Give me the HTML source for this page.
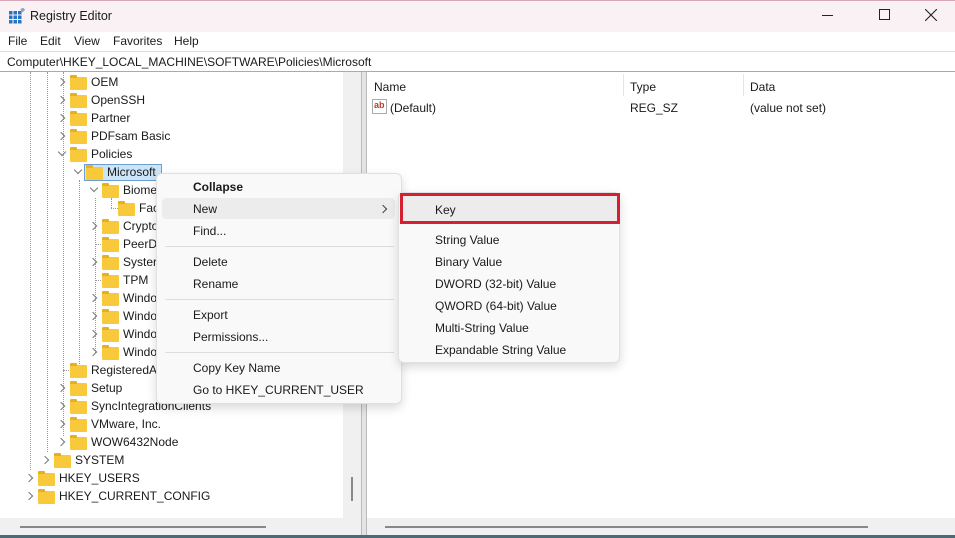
<!DOCTYPE html>
<html><head><meta charset="utf-8"><style>
*{margin:0;padding:0;box-sizing:border-box}
body{width:955px;height:538px;overflow:hidden;background:#f3eef0;font-family:"Liberation Sans",sans-serif;font-size:12px;color:#1a1a1a;position:relative}
.a{position:absolute;white-space:nowrap}
.fold{position:absolute;width:17px;height:13px;background:#f8c93a;border-radius:1px}
.fold:before{content:"";position:absolute;left:0;top:-2px;width:7px;height:3px;background:#e8b020;border-radius:1px 1px 0 0}
.chev{position:absolute;width:6px;height:6px;border-right:1.3px solid #777;border-bottom:1.3px solid #777}
.r{transform:rotate(-45deg)}.d{transform:rotate(45deg)}
.dot{position:absolute;border-left:1px dotted #999}
.hd{position:absolute;border-top:1px dotted #999;height:0}
</style></head><body>
<!-- title -->
<div class="a" style="left:0;top:0;width:955px;height:32px;background:#f9f1f3;border-top:1px solid #d9a8b4"></div>
<svg class="a" style="left:9px;top:8px" width="16" height="16"><g fill="#2a73c4"><rect x="0" y="3" width="3.5" height="3.5"/><rect x="4.5" y="3" width="3.5" height="3.5"/><rect x="9" y="3" width="3.5" height="3.5"/><rect x="0" y="7.5" width="3.5" height="3.5"/><rect x="4.5" y="7.5" width="3.5" height="3.5"/><rect x="9" y="7.5" width="3.5" height="3.5"/><rect x="0" y="12" width="3.5" height="3.5"/><rect x="4.5" y="12" width="3.5" height="3.5"/><rect x="9" y="12" width="3.5" height="3.5"/></g><rect x="12" y="0" width="3.5" height="3.5" fill="#8ab" transform="rotate(45 13.7 1.7)"/></svg>
<div class="a" style="left:30px;top:9px;font-size:12.5px">Registry Editor</div>
<div class="a" style="left:822px;top:15px;width:11px;height:1px;background:#222"></div>
<div class="a" style="left:879px;top:9px;width:11px;height:11px;border:1px solid #222"></div>
<svg class="a" style="left:925px;top:9px" width="12" height="12"><path d="M0 0L12 12M12 0L0 12" stroke="#222" stroke-width="1.1"/></svg>
<!-- menu -->
<div class="a" style="left:0;top:32px;width:955px;height:19px;background:#fff"></div>
<div class="a" style="left:8px;top:34px">File</div>
<div class="a" style="left:40px;top:34px">Edit</div>
<div class="a" style="left:74px;top:34px">View</div>
<div class="a" style="left:113px;top:34px">Favorites</div>
<div class="a" style="left:174px;top:34px">Help</div>
<div class="a" style="left:0;top:51px;width:955px;height:21px;background:#fff;border-top:1px solid #ddd;border-bottom:1px solid #aaa"></div>
<div class="a" style="left:7px;top:55px">Computer\HKEY_LOCAL_MACHINE\SOFTWARE\Policies\Microsoft</div>
<!-- left pane -->
<div class="a" style="left:0;top:72px;width:343px;height:446px;background:#fff"></div>
<div class="a" style="left:343px;top:72px;width:18px;height:446px;background:#f0f0f0"></div>
<div class="a" style="left:351px;top:477px;width:2px;height:24px;background:#888"></div>
<div class="a" style="left:361px;top:72px;width:6px;height:464px;background:#e4e4e4;border-left:1px solid #bbb;border-right:1px solid #bbb"></div>
<div class="a" style="left:367px;top:72px;width:588px;height:446px;background:#fff"></div>
<div class="a" style="left:0;top:518px;width:361px;height:17px;background:#f0f0f0"></div>
<div class="a" style="left:20px;top:526px;width:246px;height:2px;background:#888"></div>
<div class="a" style="left:367px;top:518px;width:588px;height:17px;background:#f0f0f0"></div>
<div class="a" style="left:385px;top:526px;width:483px;height:2px;background:#888"></div>
<div class="a" style="left:0;top:535px;width:955px;height:3px;background:#4a6a78"></div>
<!-- dotted guides -->
<div class="dot" style="left:30px;top:72px;height:398px"></div>
<div class="dot" style="left:47px;top:72px;height:380px"></div>
<div class="dot" style="left:63px;top:72px;height:364px"></div>
<div class="dot" style="left:79px;top:180px;height:190px"></div>
<div class="dot" style="left:95px;top:198px;height:155px"></div>
<div class="dot" style="left:111px;top:198px;height:10px"></div>
<div class="hd" style="left:111px;top:208px;width:7px"></div>
<div class="hd" style="left:95px;top:244px;width:6px"></div>
<div class="hd" style="left:95px;top:280px;width:6px"></div>
<div class="hd" style="left:63px;top:370px;width:6px"></div>
<!-- selected Microsoft -->
<div class="a" style="left:84px;top:164px;width:78px;height:17px;background:#cce4f7;border:1px solid #6a9fd0"></div>
<div id="tree"></div>
<!-- right headers -->
<div class="a" style="left:374px;top:80px">Name</div>
<div class="a" style="left:623px;top:74px;width:1px;height:22px;background:#e5e5e5"></div>
<div class="a" style="left:630px;top:80px">Type</div>
<div class="a" style="left:743px;top:74px;width:1px;height:22px;background:#e5e5e5"></div>
<div class="a" style="left:750px;top:80px">Data</div>
<div class="a" style="left:372px;top:99px;width:15px;height:15px;border:1px solid #aaa;background:#fff;font-size:9px;font-weight:bold;color:#c0392b;line-height:10px;padding-left:1px">ab</div>
<div class="a" style="left:390px;top:101px">(Default)</div>
<div class="a" style="left:630px;top:101px">REG_SZ</div>
<div class="a" style="left:750px;top:101px">(value not set)</div>
<!-- context menu -->
<div class="a" style="left:156px;top:173px;width:246px;height:231px;background:#f9f9f9;border:1px solid #e0e0e0;border-radius:6px;box-shadow:0 4px 10px rgba(0,0,0,.15)"></div>
<div class="a" style="left:162px;top:198px;width:233px;height:21px;background:#ececec;border-radius:4px"></div>
<div class="a" style="left:193px;top:180px;font-weight:bold">Collapse</div>
<div class="a" style="left:193px;top:202px">New</div>
<div class="chev r a" style="left:380px;top:206px;border-color:#444"></div>
<div class="a" style="left:193px;top:224px">Find...</div>
<div class="a" style="left:165px;top:246px;width:229px;height:1px;background:#ddd"></div>
<div class="a" style="left:193px;top:255px">Delete</div>
<div class="a" style="left:193px;top:277px">Rename</div>
<div class="a" style="left:165px;top:299px;width:229px;height:1px;background:#ddd"></div>
<div class="a" style="left:193px;top:308px">Export</div>
<div class="a" style="left:193px;top:330px">Permissions...</div>
<div class="a" style="left:165px;top:352px;width:229px;height:1px;background:#ddd"></div>
<div class="a" style="left:193px;top:361px">Copy Key Name</div>
<div class="a" style="left:193px;top:383px">Go to HKEY_CURRENT_USER</div>
<!-- submenu -->
<div class="a" style="left:398px;top:192px;width:222px;height:171px;background:#f9f9f9;border:1px solid #e0e0e0;border-radius:6px;box-shadow:0 4px 10px rgba(0,0,0,.15)"></div>
<div class="a" style="left:400px;top:193px;width:220px;height:31px;background:#ececec;border:3px solid #d42030"></div>
<div class="a" style="left:435px;top:203px">Key</div>
<div class="a" style="left:435px;top:233px">String Value</div>
<div class="a" style="left:435px;top:255px">Binary Value</div>
<div class="a" style="left:435px;top:277px">DWORD (32-bit) Value</div>
<div class="a" style="left:435px;top:299px">QWORD (64-bit) Value</div>
<div class="a" style="left:435px;top:321px">Multi-String Value</div>
<div class="a" style="left:435px;top:343px">Expandable String Value</div>
<script>
var rows=[["OEM",82,62,"r"],["OpenSSH",100,62,"r"],["Partner",118,62,"r"],["PDFsam Basic",136,62,"r"],["Policies",154,62,"d"],["Microsoft",172,78,"d"],["Biome",190,94,"d"],["Fac",208,110,""],["Crypto",226,94,"r"],["PeerD",244,94,""],["Syster",262,94,"r"],["TPM",280,94,""],["Windo",298,94,"r"],["Windo",316,94,"r"],["Windo",334,94,"r"],["Windo",352,94,"r"],["RegisteredA",370,62,""],["Setup",388,62,"r"],["SyncIntegrationClients",406,62,"r"],["VMware, Inc.",424,62,"r"],["WOW6432Node",442,62,"r"],["SYSTEM",460,46,"r"],["HKEY_USERS",478,30,"r"],["HKEY_CURRENT_CONFIG",496,30,"r"]];
var h="";rows.forEach(function(r){var x=r[2],y=r[1];
if(r[3]=="r")h+='<div class="chev r" style="left:'+(x-4)+'px;top:'+(y-3)+'px"></div>';
if(r[3]=="d")h+='<div class="chev d" style="left:'+(x-3)+'px;top:'+(y-5)+'px"></div>';
h+='<div class="fold" style="left:'+(x+8)+'px;top:'+(y-5)+'px"></div>';
h+='<div class="a" style="left:'+(x+29)+'px;top:'+(y-7)+'px">'+r[0]+'</div>';});
document.getElementById("tree").innerHTML=h;
</script>
</body></html>
